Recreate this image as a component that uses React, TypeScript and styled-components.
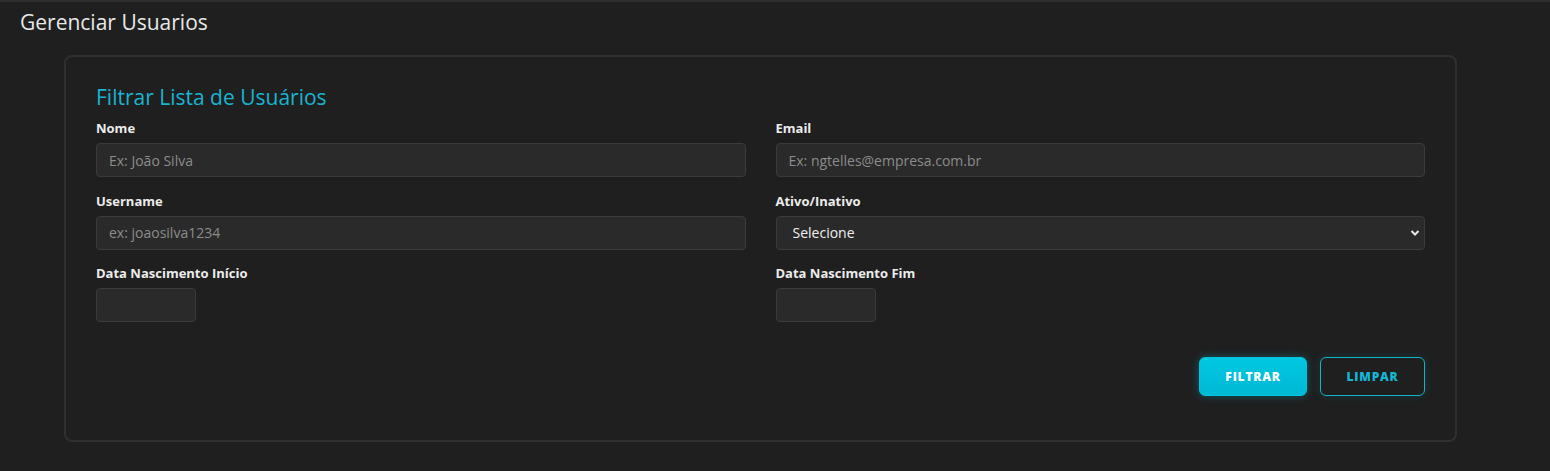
import React from "react";
import styled, { createGlobalStyle } from "styled-components";

const Global = createGlobalStyle`
  html, body { margin: 0; padding: 0; background: #1f1f1f; overflow: hidden; }
  body { font-family: "Open Sans", "Noto Sans", sans-serif; color: #e6e6e6; }
  * { box-sizing: border-box; }
`;

const Page = styled.div`
  min-height: 471px;
  background: #1f1f1f;
  border-top: 2px solid #2e2e2e;
  padding: 7px 0 30px 0;
`;

const Title = styled.h1`
  margin: 0 0 0 20px;
  font-size: 21px;
  font-weight: 400;
  line-height: 27px;
  color: #e8e8e8;
`;

const Card = styled.section`
  width: 1393px;
  margin: 19px 0 0 64px;
  border: 2px solid #2f2f2f;
  border-radius: 8px;
  background: #1f1f1f;
  padding: 26px 30px 44.5px 30px;
`;

const Heading = styled.h2`
  margin: 0 0 8px 0;
  font-size: 21px;
  font-weight: 400;
  line-height: 28px;
  color: #19b4d1;
`;

const Grid = styled.div`
  display: grid;
  grid-template-columns: 1fr 1fr;
  column-gap: 30px;
`;

const Field = styled.div`
  display: flex;
  flex-direction: column;
  gap: 6px;
  margin-bottom: 14.5px;
`;

const Label = styled.label`
  font-size: 13px;
  font-weight: 700;
  line-height: 18px;
  color: #ececec;
`;

const Input = styled.input<{ $narrow?: boolean }>`
  width: ${(p) => (p.$narrow ? "100px" : "100%")};
  height: 34px;
  background: #2a2a2a;
  border: 1px solid #3b3b3b;
  border-radius: 4px;
  padding: 0 12px;
  font-family: "Open Sans", sans-serif;
  font-size: 14px;
  color: #e6e6e6;
  outline: none;
  &::placeholder { color: #8c8c8c; }
`;

const SelectWrap = styled.div`
  position: relative;
  width: 100%;
`;

const Select = styled.select`
  width: 100%;
  height: 34px;
  appearance: none;
  background: #2a2a2a;
  border: 1px solid #3b3b3b;
  border-radius: 4px;
  padding: 0 16px;
  font-family: "Open Sans", sans-serif;
  font-size: 14px;
  color: #f0f0f0;
  outline: none;
`;

const Chevron = styled.svg`
  position: absolute;
  right: 5px;
  top: 13px;
  pointer-events: none;
`;

const Actions = styled.div`
  display: flex;
  justify-content: flex-end;
  gap: 13px;
  margin-top: 20px;
`;

const Button = styled.button<{ $outline?: boolean }>`
  height: 39px;
  width: ${(p) => (p.$outline ? "105px" : "108px")};
  padding: 0;
  border-radius: 6px;
  font-family: "Open Sans", sans-serif;
  font-size: 12px;
  font-weight: 800;
  letter-spacing: 0.8px;
  cursor: pointer;
  ${(p) =>
    p.$outline
      ? `
    background: transparent;
    border: 1px solid #14b3cc;
    color: #14b8d4;
    box-shadow: 0 0 8px rgba(0, 194, 222, 0.15);
  `
      : `
    background: linear-gradient(180deg, #00c8e2 0%, #00b8d4 100%);
    border: 1px solid #00c4de;
    color: #ffffff;
    box-shadow: 0 0 8px rgba(0, 194, 222, 0.35);
  `}
`;

export default function App() {
  return (
    <>
      <Global />
      <Page>
        <Title>Gerenciar Usuarios</Title>
        <Card>
          <Heading>Filtrar Lista de Usuários</Heading>
          <Grid>
            <Field>
              <Label>Nome</Label>
              <Input placeholder="Ex: João Silva" />
            </Field>
            <Field>
              <Label>Email</Label>
              <Input placeholder="Ex: ngtelles@empresa.com.br" />
            </Field>
            <Field>
              <Label>Username</Label>
              <Input placeholder="ex: joaosilva1234" />
            </Field>
            <Field>
              <Label>Ativo/Inativo</Label>
              <SelectWrap>
                <Select defaultValue="">
                  <option value="">Selecione</option>
                  <option value="1">Ativo</option>
                  <option value="0">Inativo</option>
                </Select>
                <Chevron width="10" height="8" viewBox="0 0 10 8">
                  <path d="M1.5 2 L5 5.5 L8.5 2" stroke="#e8e8e8" strokeWidth="2" fill="none" />
                </Chevron>
              </SelectWrap>
            </Field>
            <Field>
              <Label>Data Nascimento Início</Label>
              <Input $narrow />
            </Field>
            <Field>
              <Label>Data Nascimento Fim</Label>
              <Input $narrow />
            </Field>
          </Grid>
          <Actions>
            <Button>FILTRAR</Button>
            <Button $outline>LIMPAR</Button>
          </Actions>
        </Card>
      </Page>
    </>
  );
}
